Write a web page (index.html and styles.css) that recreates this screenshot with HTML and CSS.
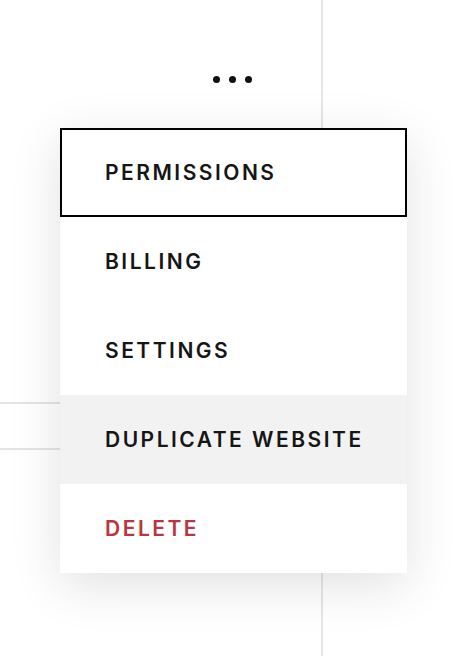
FILE: index.html
```html
<!DOCTYPE html>
<html>
<head>
<meta charset="utf-8">
<link rel="stylesheet" href="styles.css">
</head>
<body>
<div class="page">
  <div class="main">
    <div class="toolbar">
      <button class="more" aria-label="More"><span class="dot"></span><span class="dot"></span><span class="dot"></span></button>
    </div>
    <div class="row"></div>
  </div>
  <div class="side"></div>
  <ul class="menu">
    <li class="item focused">PERMISSIONS</li>
    <li class="item">BILLING</li>
    <li class="item">SETTINGS</li>
    <li class="item hover">DUPLICATE WEBSITE</li>
    <li class="item danger">DELETE</li>
  </ul>
</div>
</body>
</html>
```
FILE: styles.css
```css
html, body {
  margin: 0;
  padding: 0;
  background: #fff;
}
body {
  width: 472px;
  height: 656px;
  overflow: hidden;
  font-family: Inter, "Liberation Sans", sans-serif;
}
.page {
  position: relative;
  display: flex;
  height: 656px;
}
.main {
  width: 321px;
  border-right: 2px solid #e6e6e6;
  display: flex;
  flex-direction: column;
}
.toolbar {
  display: flex;
  justify-content: flex-end;
  padding: 76px 69px 0 0;
}
.more {
  display: flex;
  gap: 9px;
  padding: 0;
  border: 0;
  background: none;
}
.dot {
  width: 7px;
  height: 7px;
  border-radius: 50%;
  background: #111;
}
.row {
  margin-top: 319px;
  height: 44px;
  border-top: 2px solid #e4e4e4;
  border-bottom: 2px solid #e4e4e4;
}
.side {
  flex: 1;
}
.menu {
  position: absolute;
  left: 60px;
  top: 128px;
  width: 347px;
  margin: 0;
  padding: 0;
  list-style: none;
  background: #fff;
  box-shadow: 0 12px 48px rgba(0, 0, 0, 0.12);
}
.item {
  box-sizing: border-box;
  height: 89px;
  display: flex;
  align-items: center;
  padding-left: 45px;
  font-size: 21px;
  font-weight: 600;
  letter-spacing: 2.5px;
  color: #161616;
}
.focused {
  border: 2px solid #000;
  padding-left: 43px;
}
.hover {
  background: #f2f2f2;
}
.danger {
  color: #b8363d;
}
```
